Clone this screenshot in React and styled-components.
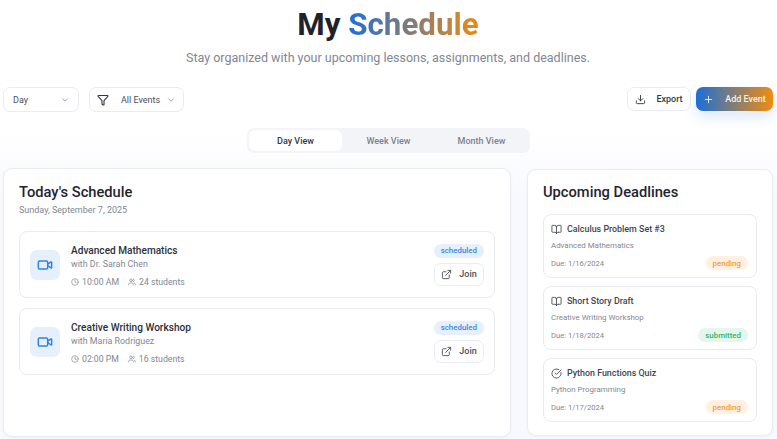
import React from 'react';
import styled, { createGlobalStyle } from 'styled-components';
import { ChevronDown, Funnel, Download, Plus, Video, Clock, Users, ExternalLink, BookOpen, CircleCheckBig } from 'lucide-react';

const Global = createGlobalStyle`
  html, body { margin: 0; padding: 0; background: #fff; }
  body { font-family: Roboto, "Noto Sans", sans-serif; color: #1f2430; }
  * { box-sizing: border-box; }
`;

const Page = styled.div`
  width: 777px;
  height: 439px;
  overflow: hidden;
  padding: 0 4px 0 3px;
  background: linear-gradient(180deg, #ffffff 0%, #ffffff 30%, #f8f9fe 45%, #f8f9fe 100%);
  display: flex;
  flex-direction: column;
`;

const Header = styled.header`
  display: flex;
  flex-direction: column;
  align-items: center;
  padding-top: 3px;
`;

const Title = styled.h1`
  margin: 0;
  height: 44px;
  font-size: 31.3px;
  line-height: 44px;
  font-weight: 700;
  color: #1f2229;
`;

const Accent = styled.span`
  background: linear-gradient(90deg, #1f6fd6 0%, #ee8a12 100%);
  -webkit-background-clip: text;
  background-clip: text;
  color: transparent;
`;

const Subtitle = styled.p`
  margin: 1px 0 0;
  height: 20px;
  font-size: 12.5px;
  line-height: 20px;
  color: #7f8794;
`;

const Toolbar = styled.div`
  margin-top: 19px;
  height: 25px;
  display: flex;
  justify-content: space-between;
  align-items: flex-start;
`;

const Group = styled.div`
  display: flex;
  gap: ${p => p.$gap}px;
`;

const Select = styled.div`
  width: ${p => p.$w}px;
  height: 25px;
  padding: 0 ${p => (p.$icon ? 7 : 8)}px 0 ${p => (p.$icon ? 7 : 9)}px;
  display: flex;
  align-items: center;
  background: #fff;
  border: 1px solid #e9ecf1;
  border-radius: 7px;
  font-size: 9px;
  color: #4a505c;
  svg { flex: none; }
`;

const SelectLabel = styled.span`
  flex: 1;
  padding-left: ${p => p.$pad || 0}px;
`;

const Button = styled.button`
  height: 24px;
  padding: 0;
  width: ${p => p.$w}px;
  display: flex;
  align-items: center;
  justify-content: center;
  gap: ${p => p.$gap}px;
  border-radius: 7px;
  font-family: inherit;
  font-size: 9px;
  font-weight: 500;
  color: #333844;
  background: #fff;
  border: 1px solid #e9ecf1;
`;

const Primary = styled(Button)`
  border: 0;
  color: #f4f1ea;
  background: linear-gradient(90deg, #1a6fd8 0%, #f08c10 100%);
  box-shadow: 0 6px 14px rgba(60, 130, 230, 0.18);
`;

const TabsRow = styled.div`
  margin-top: 16px;
  display: flex;
  justify-content: center;
`;

const Tabs = styled.div`
  width: 283px;
  height: 25px;
  margin-left: 1px;
  padding: 2px;
  display: grid;
  grid-template-columns: repeat(3, 1fr);
  background: #f2f4f7;
  border-radius: 7px;
`;

const Tab = styled.div`
  display: flex;
  align-items: center;
  justify-content: center;
  border-radius: 6px;
  font-size: 9px;
  font-weight: 500;
  color: ${p => (p.$active ? '#333844' : '#7b8290')};
  background: ${p => (p.$active ? '#fff' : 'transparent')};
`;

const Columns = styled.div`
  margin-top: 15px;
  display: grid;
  grid-template-columns: 508px 246px;
  gap: 16px;
  flex: 1;
  align-items: start;
`;

const Card = styled.section`
  height: 269px;
  background: #fff;
  border: 1px solid #e9ecf3;
  border-radius: 9px;
  box-shadow: 0 1px 3px rgba(70, 90, 140, 0.05);
`;

const ScheduleCard = styled(Card)`
  padding: 13px 15px 0;
`;

const DeadlineCard = styled(Card)`
  height: 267px;
  margin-top: 1px;
  padding: 12px 15px 0;
`;

const CardTitle = styled.h2`
  margin: 0;
  height: 21px;
  font-size: 14.7px;
  line-height: 21px;
  font-weight: 500;
  color: #1f2430;
`;

const CardDate = styled.div`
  margin-top: 1px;
  height: 12px;
  font-size: 9px;
  line-height: 12px;
  color: #7f8794;
`;

const EventList = styled.div`
  margin-top: 15px;
  display: flex;
  flex-direction: column;
  gap: 10px;
`;

const EventRow = styled.article`
  height: 67px;
  padding: 0 10px;
  display: flex;
  align-items: center;
  background: #fff;
  border: 1px solid #e8ebf0;
  border-radius: 8px;
`;

const IconTile = styled.div`
  width: 30px;
  height: 30px;
  margin-right: 11px;
  display: flex;
  align-items: center;
  justify-content: center;
  background: #e6f0fc;
  border-radius: 7px;
  color: #2f80ed;
`;

const EventBody = styled.div`
  flex: 1;
  padding-top: 2px;
`;

const EventName = styled.div`
  font-size: 10.1px;
  line-height: 14px;
  font-weight: 500;
  color: #2b303b;
`;

const EventTeacher = styled.div`
  font-size: 8.9px;
  line-height: 12px;
  margin-top: 0;
  color: #7f8794;
`;

const Meta = styled.div`
  margin-top: 6px;
  display: flex;
  gap: 9px;
  font-size: 8.7px;
  line-height: 12px;
  color: #7f8794;
`;

const MetaItem = styled.span`
  display: flex;
  align-items: center;
  gap: 3px;
`;

const EventActions = styled.div`
  display: flex;
  flex-direction: column;
  align-items: flex-end;
  gap: 5px;
`;

const Badge = styled.span`
  height: 14px;
  padding: 0 7px;
  display: inline-flex;
  align-items: center;
  border-radius: 8px;
  font-size: 7.9px;
  font-weight: 500;
  color: ${p => p.$fg};
  background: ${p => p.$bg};
`;

const Join = styled(Button)`
  color: #4a505c;
  font-weight: 500;
  height: 23px;
`;

const DeadlineList = styled.div`
  margin-top: 11px;
  display: flex;
  flex-direction: column;
  gap: 8px;
`;

const Deadline = styled.article`
  height: 64px;
  padding: 7px 8px 0 7px;
  background: #fff;
  border: 1px solid #e8ebf0;
  border-radius: 8px;
`;

const DeadlineHead = styled.div`
  display: flex;
  align-items: center;
  gap: 5px;
  height: 14px;
  font-size: 8.9px;
  font-weight: 500;
  color: #3f4450;
  svg { color: #4a505c; }
`;

const Course = styled.div`
  margin-top: 4px;
  height: 12px;
  font-size: 7.9px;
  line-height: 12px;
  color: #7f8794;
`;

const DeadlineFoot = styled.div`
  margin-top: 4px;
  display: flex;
  justify-content: space-between;
  align-items: center;
  font-size: 7.6px;
  color: #7f8794;
`;

const events = [
  { name: 'Advanced Mathematics', teacher: 'with Dr. Sarah Chen', time: '10:00 AM', students: '24 students' },
  { name: 'Creative Writing Workshop', teacher: 'with Maria Rodriguez', time: '02:00 PM', students: '16 students' },
];

const deadlines = [
  { title: 'Calculus Problem Set #3', course: 'Advanced Mathematics', due: 'Due: 1/16/2024', status: 'pending', Icon: BookOpen },
  { title: 'Short Story Draft', course: 'Creative Writing Workshop', due: 'Due: 1/18/2024', status: 'submitted', Icon: BookOpen },
  { title: 'Python Functions Quiz', course: 'Python Programming', due: 'Due: 1/17/2024', status: 'pending', Icon: CircleCheckBig },
];

const statusColors = {
  pending: { fg: '#f59a3c', bg: '#fff0e2' },
  submitted: { fg: '#2fb56a', bg: '#e5f7ec' },
};

export default function App() {
  return (
    <Page>
      <Global />
      <Header>
        <Title>My <Accent>Schedule</Accent></Title>
        <Subtitle>Stay organized with your upcoming lessons, assignments, and deadlines.</Subtitle>
      </Header>
      <Toolbar>
        <Group $gap={10}>
          <Select $w={76}>
            <SelectLabel>Day</SelectLabel>
            <ChevronDown size={10} color="#8a909c" />
          </Select>
          <Select $w={95} $icon>
            <Funnel size={12} color="#333844" strokeWidth={2.2} />
            <SelectLabel $pad={12}>All Events</SelectLabel>
            <ChevronDown size={10} color="#8a909c" />
          </Select>
        </Group>
        <Group $gap={5}>
          <Button $w={64} $gap={10}><Download size={11} />Export</Button>
          <Primary $w={77} $gap={11}><Plus size={11} />Add Event</Primary>
        </Group>
      </Toolbar>
      <TabsRow>
        <Tabs>
          <Tab $active>Day View</Tab>
          <Tab>Week View</Tab>
          <Tab>Month View</Tab>
        </Tabs>
      </TabsRow>
      <Columns>
        <ScheduleCard>
          <CardTitle>Today's Schedule</CardTitle>
          <CardDate>Sunday, September 7, 2025</CardDate>
          <EventList>
            {events.map(e => (
              <EventRow key={e.name}>
                <IconTile><Video size={16} strokeWidth={2.2} /></IconTile>
                <EventBody>
                  <EventName>{e.name}</EventName>
                  <EventTeacher>{e.teacher}</EventTeacher>
                  <Meta>
                    <MetaItem><Clock size={8} />{e.time}</MetaItem>
                    <MetaItem><Users size={8} />{e.students}</MetaItem>
                  </Meta>
                </EventBody>
                <EventActions>
                  <Badge $fg="#3b87ea" $bg="#e6f0fc">scheduled</Badge>
                  <Join $w={50} $gap={7}><ExternalLink size={11} />Join</Join>
                </EventActions>
              </EventRow>
            ))}
          </EventList>
        </ScheduleCard>
        <DeadlineCard>
          <CardTitle>Upcoming Deadlines</CardTitle>
          <DeadlineList>
            {deadlines.map(({ title, course, due, status, Icon }) => (
              <Deadline key={title}>
                <DeadlineHead><Icon size={11} />{title}</DeadlineHead>
                <Course>{course}</Course>
                <DeadlineFoot>
                  {due}
                  <Badge $fg={statusColors[status].fg} $bg={statusColors[status].bg}>{status}</Badge>
                </DeadlineFoot>
              </Deadline>
            ))}
          </DeadlineList>
        </DeadlineCard>
      </Columns>
    </Page>
  );
}
